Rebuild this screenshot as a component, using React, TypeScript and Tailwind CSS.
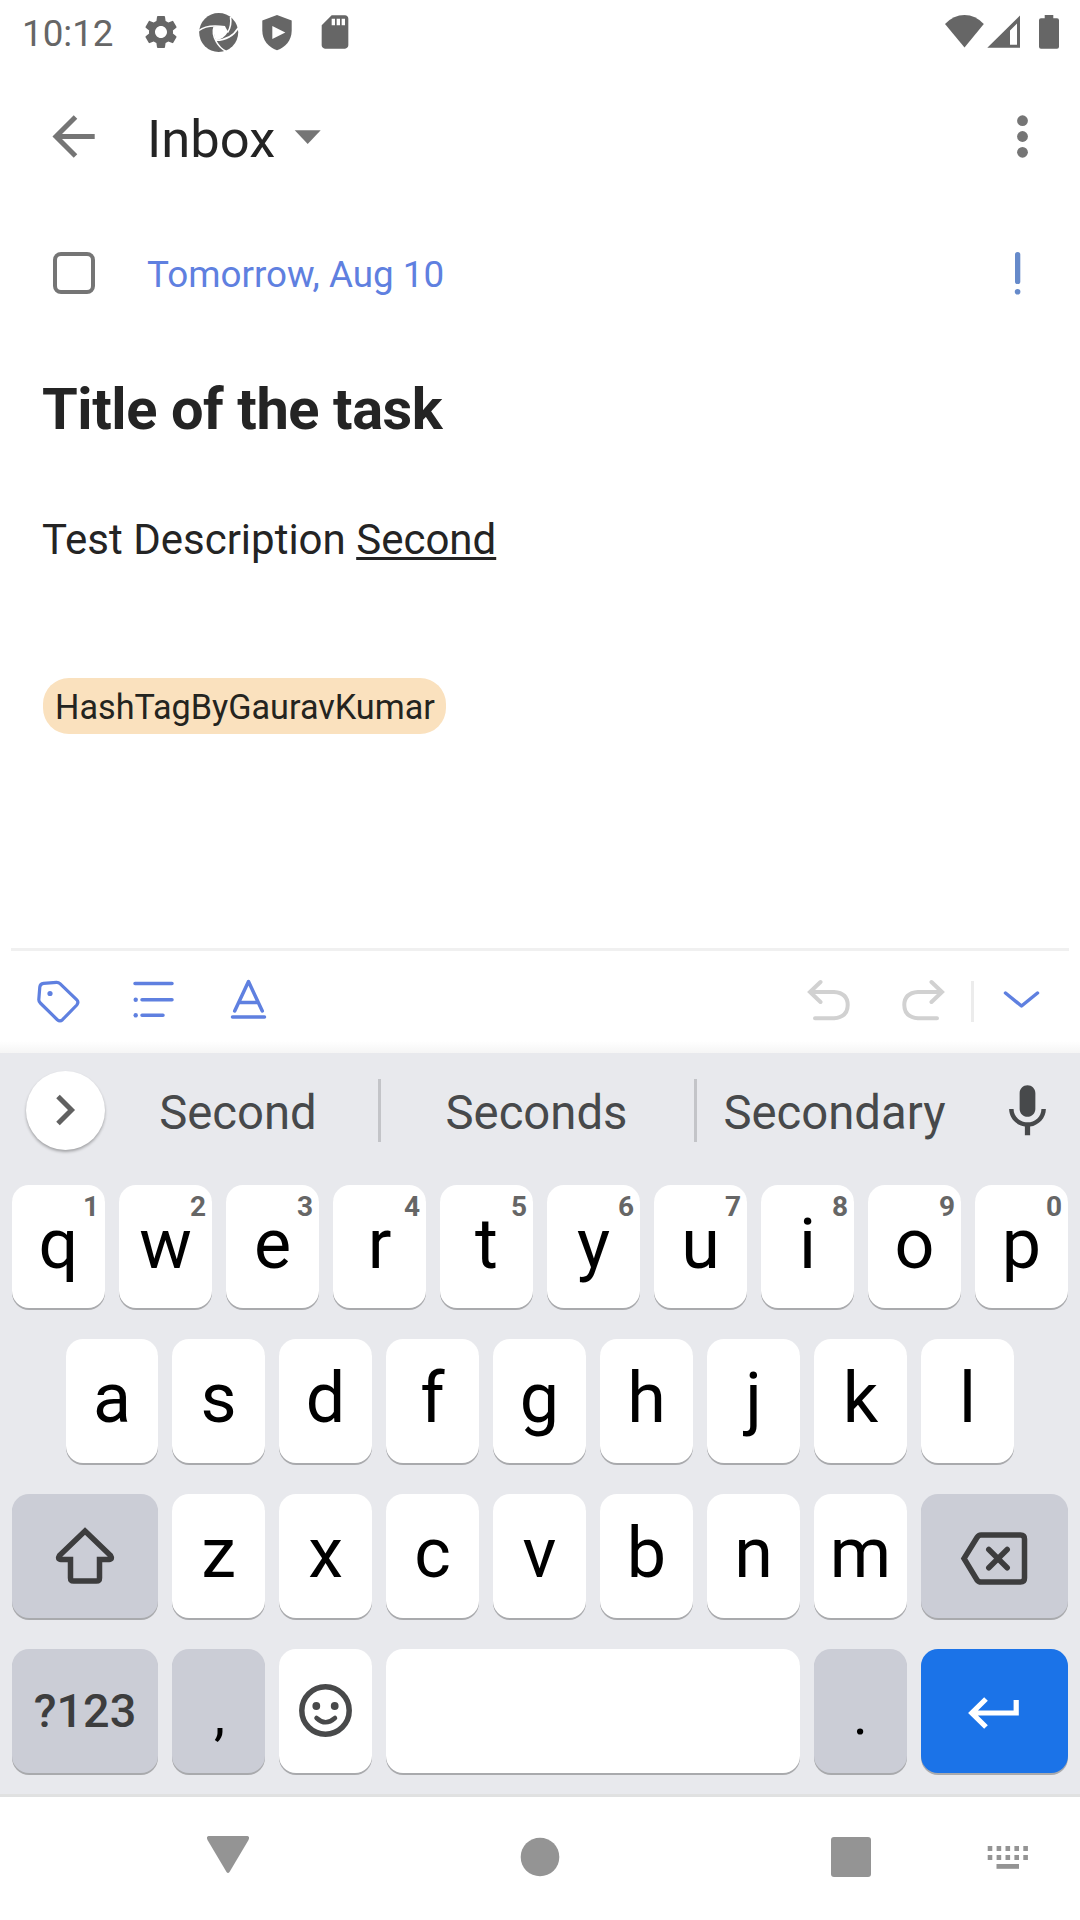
import React from "react";
import { MdMic, MdSdCard, MdSettings } from "react-icons/md";

type IconProps = {
  box: [number, number, number, number];
  className?: string;
  children: React.ReactNode;
};

/* Icon drawn in screen units: box is [x, y, width, height]. */
function Icon({ box, className = "", children }: IconProps) {
  return (
    <svg
      width={box[2]}
      height={box[3]}
      viewBox={box.join(" ")}
      fill="none"
      className={"shrink-0 " + className}
    >
      {children}
    </svg>
  );
}

function StatusBar() {
  return (
    <div className="flex h-[63px] items-center pl-[22px] text-[#666666]">
      <span className="w-[119px] pt-[4px] text-[36.75px] leading-[44px]">10:12</span>
      <MdSettings className="size-[40px] shrink-0" />
      <Icon box={[198, 10, 42, 42]} className="ml-[17px]">
        <circle cx="218.7" cy="31.5" r="19.5" fill="currentColor" />
        <path d="M214.300 25.300L225 25.300L228 30.700Q224 38 216 39.300Q212.500 32 214.300 25.300Z" fill="#fff" />
        <path d="M199 29.500Q207 23 225 25.800M230.500 16Q232 25 227.500 31.500M238.200 27Q231 39 216 39.300M215.500 39Q219 47 227 51M214.300 25Q211.500 33 216.500 41" stroke="#fff" strokeWidth="1.6" />
      </Icon>
      <Icon box={[257, 10, 40, 42]} className="ml-[17px]">
        <path d="M277 14L262.300 19.500V29.500C262.300 39 268.500 46.500 277 49.300C285.500 46.500 291.700 39 291.700 29.500V19.500Z" fill="currentColor" />
        <path d="M272.300 25V38L285.300 31.500Z" fill="#fff" />
      </Icon>
      <MdSdCard className="ml-[18px] size-[40px] shrink-0" />
      <Icon box={[940, 10, 130, 42]} className="ml-auto mr-[10px]">
        <path d="M964.500 46.500L945 23Q953.500 14 964.500 14T983.800 23Z" fill="currentColor" />
        <path d="M1020 14.500V46.700H987.300ZM1017 22.500L1010 29.500V43.700H1017Z" fill="currentColor" fillRule="evenodd" />
        <path d="M1044.700 14H1053.300V17.300H1057A2 2 0 0 1 1059 19.300V45.700A2 2 0 0 1 1057 47.700H1041A2 2 0 0 1 1039 45.700V19.300A2 2 0 0 1 1041 17.300H1044.700Z" fill="currentColor" />
      </Icon>
    </div>
  );
}

function Header() {
  return (
    <header className="flex h-[147px] items-center pl-[48px] text-[#757575]">
      <Icon box={[48, 112, 52, 49]}>
        <path d="M94.700 136.500H56M75.500 117L56 136.500L75.500 156" stroke="currentColor" strokeWidth="5" />
      </Icon>
      <h1 className="ml-[47px] pt-[4px] text-[52.5px] leading-[64px] text-[#242424]">Inbox</h1>
      <Icon box={[292, 126, 32, 22]} className="ml-[17px]">
        <path d="M294.700 130.300H320.700L307.700 144Z" fill="currentColor" />
      </Icon>
      <Icon box={[1010, 112, 25, 49]} className="ml-auto mr-[45px]">
        <circle cx="1022.500" cy="120.700" r="5.400" fill="currentColor" />
        <circle cx="1022.500" cy="136.500" r="5.400" fill="currentColor" />
        <circle cx="1022.500" cy="152.300" r="5.400" fill="currentColor" />
      </Icon>
    </header>
  );
}

function DateRow() {
  return (
    <div className="flex h-[126px] items-center pl-[52.5px]">
      <span className="-mt-px size-[42px] rounded-[8px] border-4 border-[#757575]" />
      <span className="ml-[52.5px] pt-[3px] text-[36.85px] leading-[44px] text-[#5f80e0]">
        Tomorrow, Aug 10
      </span>
      <Icon box={[1010, 248, 16, 50]} className="ml-auto mr-[54px] text-[#668aca]">
        <rect x="1015" y="252" width="5.300" height="32" rx="2.600" fill="currentColor" />
        <circle cx="1017.600" cy="291.700" r="2.800" fill="currentColor" />
      </Icon>
    </div>
  );
}

function Editor() {
  return (
    <main className="flex h-[612px] flex-col items-start px-[42px] text-[#242424]">
      <h2 className="mt-[39px] text-[57.75px] font-bold leading-[68px] tracking-[-0.42px]">
        Title of the task
      </h2>
      <p className="mt-[72px] text-[42px] leading-[50px]">
        Test Description{" "}
        <span className="underline decoration-[2.500px] underline-offset-[3px]">Second</span>
      </p>
      <span className="ml-px mt-[113px] flex h-[56px] w-[403px] items-center rounded-[26px] bg-[#fae1be] pl-[12px] pt-[4px] text-[34.2px] text-[#242420]">
        HashTagByGauravKumar
      </span>
    </main>
  );
}

function Toolbar() {
  return (
    <div className="relative flex h-[105px] flex-col">
      <div className="mx-[11px] h-[3px] shrink-0 bg-[#f0f0f0]" />
      <div className="flex h-[102px] items-center px-[34px] text-[#5f80e0]">
        <Icon box={[34, 978, 48, 48]}>
          <path d="M43.500 983.300L56.500 982.300Q58.500 982.200 60 983.600L76.800 999.800Q79 1002.300 76.800 1005L62.500 1019.700Q60 1022 57.300 1019.700L40.300 1003Q38.700 1001.500 38.800 999.500L39.800 987Q40.200 983.700 43.500 983.300Z" stroke="currentColor" strokeWidth="3.200" />
          <circle cx="50" cy="993.500" r="2.600" fill="currentColor" />
        </Icon>
        <Icon box={[129, 978, 48, 48]} className="ml-[47px]">
          <path d="M135 983.600H172M142 999.700H172M142 1015.300H163" stroke="currentColor" strokeWidth="3.500" strokeLinecap="round" />
          <circle cx="135.700" cy="999.700" r="2.200" fill="currentColor" />
          <circle cx="135.700" cy="1015.300" r="2.200" fill="currentColor" />
        </Icon>
        <Icon box={[225, 978, 48, 48]} className="ml-[48px]">
          <path d="M234.700 1011L248.500 981.500L262.300 1011M240 1002.500H257M232.500 1017H264.500" stroke="currentColor" strokeWidth="3.500" strokeLinecap="round" strokeLinejoin="round" />
        </Icon>
        <Icon box={[805, 976, 48, 52]} className="ml-auto text-[#d1d1d1]">
          <path d="M820.500 982L810 992L820.500 1002M811 992H834Q847.700 993 847.700 1005T834 1018.300H815" stroke="currentColor" strokeWidth="4" strokeLinecap="round" />
        </Icon>
        <Icon box={[899, 976, 48, 52]} className="ml-[46px] text-[#d1d1d1]">
          <path d="M931.500 982L942 992L931.500 1002M941 992H918Q904.300 993 904.300 1005T918 1018.300H937" stroke="currentColor" strokeWidth="4" strokeLinecap="round" />
        </Icon>
        <span className="ml-[24px] h-[41px] w-[3px] -translate-y-[1px] bg-[#ececec]" />
        <Icon box={[998, 978, 48, 48]} className="ml-[24px]">
          <path d="M1005.500 993L1021.500 1006L1037.500 993" stroke="currentColor" strokeWidth="3.500" strokeLinecap="round" strokeLinejoin="round" />
        </Icon>
      </div>
      <div className="absolute inset-x-0 bottom-0 h-[12px] bg-linear-to-b from-white to-[#f5f5f5]" />
    </div>
  );
}

function Suggestions() {
  return (
    <div className="flex h-[132px] items-center pb-[18px] pl-[26px] text-[47.25px] leading-[56px] text-[#47494b]">
      <button className="flex size-[79px] items-center justify-center rounded-full bg-white shadow-[0_2px_3px_rgba(0,0,0,0.3)]">
        <Icon box={[50, 1090, 31, 40]}>
          <path d="M58 1096.500L71.500 1110L58 1123.500" stroke="#616161" strokeWidth="5" />
        </Icon>
      </button>
      <span className="w-[273px] pr-[7px] pt-[6px] text-center">Second</span>
      <span className="h-[63px] w-[3px] bg-[#c3c4c8]" />
      <span className="w-[313px] pr-[2px] pt-[6px] text-center">Seconds</span>
      <span className="h-[63px] w-[3px] bg-[#c3c4c8]" />
      <span className="w-[277px] pr-[2px] pt-[6px] text-center">Secondary</span>
      <MdMic className="mt-[3px] ml-[22px] size-[63px] shrink-0" />
    </div>
  );
}

const keyBase =
  "relative flex items-center justify-center rounded-[17px] shadow-[0_2px_0_#a9aaad]";

function Key({ label, hint, first }: { label: string; hint?: string; first?: boolean }) {
  return (
    <button
      className={
        keyBase +
        " bg-white text-[70px] leading-[84px] text-black " +
        (first ? "w-[92px]" : "w-[93px]")
      }
    >
      <span className="-translate-y-[3px]">{label}</span>
      {hint && (
        <span className="absolute right-[6px] top-[5px] text-[28px] font-bold leading-[34px] text-[#666666]">
          {hint}
        </span>
      )}
    </button>
  );
}

const topRow = ["q", "w", "e", "r", "t", "y", "u", "i", "o", "p"];
const middleRow = ["a", "s", "d", "f", "g", "h", "j", "k", "l"];
const bottomRow = ["z", "x", "c", "v", "b", "n", "m"];

function Keyboard() {
  return (
    <div className="h-[744px] border-b-[3px] border-[#e0e1e1] bg-[#e8e9ed]">
      <Suggestions />
      <div className="flex flex-col gap-[31px] px-[12px]">
        <div className="flex h-[123px] gap-[14px]">
          {topRow.map((k, i) => (
            <Key key={k} label={k} hint={String((i + 1) % 10)} />
          ))}
        </div>
        <div className="flex h-[124px] gap-[14px] pl-[54px]">
          {middleRow.map((k, i) => (
            <Key key={k} label={k} first={i === 0} />
          ))}
        </div>
        <div className="flex h-[124px] gap-[14px]">
          <button className={keyBase + " w-[146px] bg-[#cbcdd6]"}>
            <Icon box={[50, 1522, 70, 68]}>
              <path d="M85 1531L110.500 1555.500Q113 1559.300 109 1559.500H99.500V1578Q99.500 1581 96.500 1581H73.500Q70.500 1581 70.500 1578V1559.500H61Q57 1559.300 59.500 1555.500Z" stroke="#3d3d3e" strokeWidth="5.500" />
            </Icon>
          </button>
          {bottomRow.map((k) => (
            <Key key={k} label={k} />
          ))}
          <button className={keyBase + " w-[147px] bg-[#cbcdd6]"}>
            <Icon box={[955.5, 1523, 78, 66]}>
              <path d="M980.500 1535H1020Q1024 1535 1024 1539V1578Q1024 1582 1020 1582H980.500Q978 1582 976.500 1580L963.500 1558.500L976.500 1537.500Q978 1535 980.500 1535Z" stroke="#3d3d3e" strokeWidth="5.500" />
              <path d="M988.300 1549.500L1006.700 1567.800M1006.700 1549.500L988.300 1567.800" stroke="#3d3d3e" strokeWidth="5.500" strokeLinecap="round" />
            </Icon>
          </button>
        </div>
        <div className="flex h-[124px] gap-[14px]">
          <button className={keyBase + " w-[146px] bg-[#cbcdd6] text-[46.8px] font-medium text-[#3d3d3e]"}>
            ?123
          </button>
          <button className={keyBase + " w-[93px] bg-[#cbcdd6] text-[56px] text-black"}>
            <span className="translate-x-px translate-y-[4px]">,</span>
          </button>
          <button className={keyBase + " w-[93px] bg-white"}>
            <Icon box={[295, 1680, 61, 62]}>
              <circle cx="325.500" cy="1710.500" r="23.700" stroke="#48494a" strokeWidth="5.500" />
              <circle cx="316.300" cy="1706" r="3.900" fill="#48494a" />
              <circle cx="334.700" cy="1706" r="3.900" fill="#48494a" />
              <path d="M316.500 1718Q325.500 1726.500 335 1718" stroke="#48494a" strokeWidth="4.500" strokeLinecap="round" />
            </Icon>
          </button>
          <button aria-label="space" className={keyBase + " w-[414px] bg-white"} />
          <button className={keyBase + " w-[93px] bg-[#cbcdd6] text-[56px] text-black"}>
            <span className="translate-y-[4px]">.</span>
          </button>
          <button className={keyBase + " w-[147px] bg-[#1b73e8]"}>
            <Icon box={[964.5, 1689, 60, 44]}>
              <path d="M1015.700 1700V1713H972M985.500 1699L971.300 1713L985.500 1727" stroke="#fff" strokeWidth="5.200" />
            </Icon>
          </button>
        </div>
      </div>
    </div>
  );
}

function NavBar() {
  return (
    <nav className="flex h-[123px] items-center pl-[200px] text-[#949494]">
      <Icon box={[200, 1830, 56, 57]}>
        <path d="M208.500 1836H247.500Q250 1836.500 248.500 1840L229.500 1872Q228 1874 226.500 1872L207.500 1840Q206 1836.500 208.500 1836Z" fill="currentColor" />
      </Icon>
      <Icon box={[512, 1830, 56, 57]} className="ml-[256px]">
        <circle cx="540" cy="1857" r="19.300" fill="currentColor" />
      </Icon>
      <Icon box={[823, 1830, 56, 57]} className="ml-[255px]">
        <rect x="831" y="1837" width="40" height="40" rx="3" fill="currentColor" />
      </Icon>
      <Icon box={[980, 1830, 56, 57]} className="ml-[101px]">
        {[0, 1, 2, 3, 4].map((c) => (
          <React.Fragment key={c}>
            <rect x={987.7 + c * 8.9} y="1846" width="4.600" height="5" fill="currentColor" />
            <rect x={987.7 + c * 8.9} y="1855" width="4.600" height="5" fill="currentColor" />
          </React.Fragment>
        ))}
        <rect x="996.500" y="1864" width="22.500" height="4.800" fill="currentColor" />
      </Icon>
    </nav>
  );
}

export default function App() {
  return (
    <div className="h-[1920px] w-[1080px] overflow-hidden bg-white font-[Roboto,sans-serif]">
      <StatusBar />
      <Header />
      <DateRow />
      <Editor />
      <Toolbar />
      <Keyboard />
      <NavBar />
    </div>
  );
}
